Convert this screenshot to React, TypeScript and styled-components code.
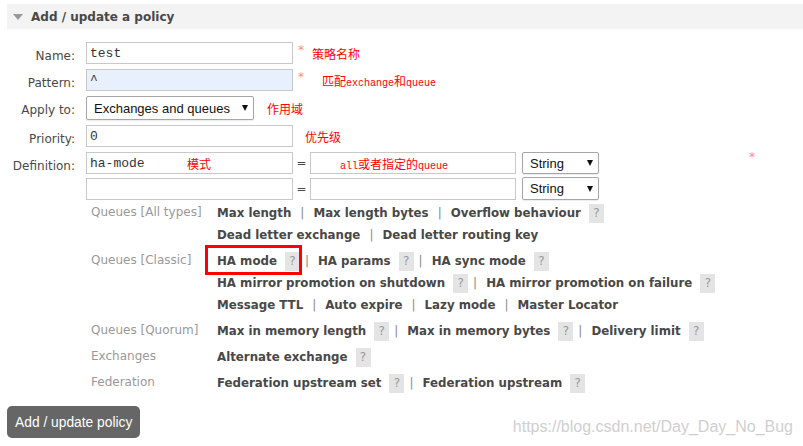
import React from "react";
import styled, { createGlobalStyle } from "styled-components";

const GlobalStyle = createGlobalStyle`
  html, body { margin: 0; padding: 0; background: #fff; }
  body {
    font-family: "DejaVu Sans", Verdana, sans-serif;
    font-size: 12px;
    color: #484848;
  }
  * { box-sizing: border-box; }
`;

const Page = styled.div`
  position: relative;
  width: 803px;
  height: 446px;
  overflow: hidden;
  padding: 4px 0 0 7px;
`;

const SectionHeader = styled.div`
  height: 25px;
  background: #f3f3f3;
  display: flex;
  align-items: center;
  gap: 8px;
  padding-left: 6px;
`;

const Triangle = styled.span`
  width: 0;
  height: 0;
  border-left: 5.5px solid transparent;
  border-right: 5.5px solid transparent;
  border-top: 6px solid #999;
`;

const Title = styled.h2`
  margin: 0;
  font-size: 12px;
  font-weight: bold;
  color: #484848;
`;

const FormGrid = styled.div`
  margin-top: 13px;
  display: grid;
  grid-template-columns: 68px 1fr;
  column-gap: 11px;
  row-gap: 5px;
  align-items: start;
`;

const Label = styled.label`
  text-align: right;
  padding-top: 6px;
  line-height: 16px;
  white-space: nowrap;
`;

const FieldRow = styled.div`
  display: flex;
  align-items: center;
`;

const TextInput = styled.input<{ $w: number; $tint?: boolean }>`
  width: ${(p) => p.$w}px;
  height: 22px;
  margin: 0;
  border: 1px solid #c8c8c8;
  padding: 0 3px;
  font-family: "Liberation Mono", "Courier New", monospace;
  font-size: 13px;
  color: #333;
  background: ${(p) => (p.$tint ? "#e8f0fe" : "#fff")};
  outline: none;
`;

const Mand = styled.span`
  align-self: flex-start;
  line-height: 16px;
  color: #f88;
  font-size: 12px;
  margin-left: 5px;
`;

const Note = styled.span<{ $ml?: number }>`
  margin-left: ${(p) => p.$ml ?? 0}px;
  color: #f00;
  font-family: "Noto Sans CJK SC", sans-serif;
  font-size: 12px;
  white-space: nowrap;
`;

const Lat = styled.span`
  font-family: "Liberation Mono", monospace;
  font-size: 10px;
`;

const FieldWrap = styled.span`
  position: relative;
  display: inline-flex;
`;

const OverNote = styled.span<{ $left: number }>`
  position: absolute;
  left: ${(p) => p.$left}px;
  top: 50%;
  transform: translateY(-50%);
  color: #f00;
  font-family: "Noto Sans CJK SC", sans-serif;
  font-size: 12px;
  white-space: nowrap;
  pointer-events: none;
`;

const SelectBox = styled.div<{ $w: number; $h: number }>`
  width: ${(p) => p.$w}px;
  height: ${(p) => p.$h}px;
  border: 1px solid #a6a6a6;
  border-radius: 2px;
  background: #fff;
  display: flex;
  align-items: center;
  justify-content: space-between;
  padding: 0 5px 0 7px;
  font-family: "Liberation Sans", Arial, sans-serif;
  font-size: 13px;
  color: #111;
  box-shadow: 0 1px 1px rgba(0, 0, 0, 0.08);
`;

const Caret = styled.span`
  width: 0;
  height: 0;
  border-left: 3.5px solid transparent;
  border-right: 3.5px solid transparent;
  border-top: 6px solid #111;
`;

const DefCell = styled.div`
  display: flex;
  flex-direction: column;
`;

const DefWrap = styled.div`
  display: flex;
  width: 669px;
`;

const DefRows = styled.div`
  display: flex;
  flex-direction: column;
  gap: 3px;
`;

const DefMand = styled.span`
  margin-left: auto;
  align-self: flex-start;
  line-height: 10px;
  color: #f88;
  font-size: 12px;
`;

const Eq = styled.span`
  width: 17px;
  text-align: center;
  color: #484848;
`;

const Spacer = styled.span`
  width: 6px;
`;

const HelpTable = styled.div`
  display: grid;
  grid-template-columns: 126px 1fr;
  padding-left: 5px;
`;

const Category = styled.div`
  padding: 1px 0 3px;
  line-height: 22px;
  font-size: 12px;
  color: #999;
  white-space: nowrap;
`;

const Links = styled.div`
  padding: 2px 0;
`;

const LinkLine = styled.div`
  height: 22px;
  display: flex;
  align-items: center;
  white-space: nowrap;
`;

const ArgLink = styled.span`
  font-weight: bold;
  font-size: 11.8px;
  color: #484848;
`;

const HelpBox = styled.span`
  display: inline-block;
  width: 15px;
  height: 19px;
  line-height: 19px;
  margin-left: 8px;
  text-align: center;
  background: #e4e4e4;
  color: #999;
  font-size: 12px;
`;

const Sep = styled.span<{ $afterHelp: boolean }>`
  color: #888;
  margin: 0 9px 0 ${(p) => (p.$afterHelp ? 5 : 9)}px;
`;

const Marked = styled.span`
  position: relative;
  display: inline-flex;
  align-items: center;
  &::after {
    content: "";
    position: absolute;
    top: -7px;
    bottom: -4px;
    left: -12px;
    right: -2px;
    border: 3px solid #f00;
  }
`;

const SubmitButton = styled.button`
  margin-top: 10px;
  height: 32px;
  padding: 0 8px;
  border: none;
  border-radius: 5px;
  background: #666;
  color: #fff;
  font-family: "Liberation Sans", Arial, sans-serif;
  font-size: 13.8px;
`;

const Watermark = styled.div`
  position: absolute;
  right: 10px;
  bottom: 10px;
  color: #cfcfcf;
  font-family: "Liberation Sans", Arial, sans-serif;
  font-size: 16px;
`;

type Item = { t: string; help?: boolean; mark?: boolean };
type Group = { label: string; lines: Item[][] };

const groups: Group[] = [
  {
    label: "Queues [All types]",
    lines: [
      [{ t: "Max length" }, { t: "Max length bytes" }, { t: "Overflow behaviour", help: true }],
      [{ t: "Dead letter exchange" }, { t: "Dead letter routing key" }],
    ],
  },
  {
    label: "Queues [Classic]",
    lines: [
      [
        { t: "HA mode", help: true, mark: true },
        { t: "HA params", help: true },
        { t: "HA sync mode", help: true },
      ],
      [
        { t: "HA mirror promotion on shutdown", help: true },
        { t: "HA mirror promotion on failure", help: true },
      ],
      [{ t: "Message TTL" }, { t: "Auto expire" }, { t: "Lazy mode" }, { t: "Master Locator" }],
    ],
  },
  {
    label: "Queues [Quorum]",
    lines: [
      [
        { t: "Max in memory length", help: true },
        { t: "Max in memory bytes", help: true },
        { t: "Delivery limit", help: true },
      ],
    ],
  },
  { label: "Exchanges", lines: [[{ t: "Alternate exchange", help: true }]] },
  {
    label: "Federation",
    lines: [[{ t: "Federation upstream set", help: true }, { t: "Federation upstream", help: true }]],
  },
];

const renderItem = (it: Item) => {
  const inner = (
    <>
      <ArgLink>{it.t}</ArgLink>
      {it.help && <HelpBox>?</HelpBox>}
    </>
  );
  return it.mark ? <Marked>{inner}</Marked> : inner;
};

const Select = ({ w, h, text }: { w: number; h: number; text: string }) => (
  <SelectBox $w={w} $h={h}>
    <span>{text}</span>
    <Caret />
  </SelectBox>
);

export default function App() {
  return (
    <>
      <GlobalStyle />
      <Page>
        <SectionHeader>
          <Triangle />
          <Title>Add / update a policy</Title>
        </SectionHeader>

        <FormGrid>
          <Label>Name:</Label>
          <FieldRow>
            <TextInput $w={207} value="test" readOnly />
            <Mand>*</Mand>
            <Note $ml={8}>策略名称</Note>
          </FieldRow>

          <Label>Pattern:</Label>
          <FieldRow>
            <TextInput $w={207} $tint value="^" readOnly />
            <Mand>*</Mand>
            <Note $ml={18}>
              匹配<Lat>exchange</Lat>和<Lat>queue</Lat>
            </Note>
          </FieldRow>

          <Label>Apply to:</Label>
          <FieldRow>
            <Select w={168} h={24} text="Exchanges and queues" />
            <Note $ml={13}>作用域</Note>
          </FieldRow>

          <Label>Priority:</Label>
          <FieldRow>
            <TextInput $w={207} value="0" readOnly />
            <Note $ml={12}>优先级</Note>
          </FieldRow>

          <Label>Definition:</Label>
          <DefCell>
            <DefWrap>
              <DefRows>
                <FieldRow>
                  <FieldWrap>
                    <TextInput $w={207} value="ha-mode" readOnly />
                    <OverNote $left={101}>模式</OverNote>
                  </FieldWrap>
                  <Eq>=</Eq>
                  <FieldWrap>
                    <TextInput $w={206} value="" readOnly />
                    <OverNote $left={30}>
                      <Lat>all</Lat>或者指定的<Lat>queue</Lat>
                    </OverNote>
                  </FieldWrap>
                  <Spacer />
                  <Select w={77} h={22} text="String" />
                </FieldRow>
                <FieldRow>
                  <TextInput $w={207} value="" readOnly />
                  <Eq>=</Eq>
                  <TextInput $w={206} value="" readOnly />
                  <Spacer />
                  <Select w={77} h={23} text="String" />
                </FieldRow>
              </DefRows>
              <DefMand>*</DefMand>
            </DefWrap>

            <HelpTable>
              {groups.map((g) => (
                <React.Fragment key={g.label}>
                  <Category>{g.label}</Category>
                  <Links>
                    {g.lines.map((line, li) => (
                      <LinkLine key={li}>
                        {line.map((it, i) => (
                          <React.Fragment key={it.t}>
                            {i > 0 && <Sep $afterHelp={!!line[i - 1].help}>|</Sep>}
                            {renderItem(it)}
                          </React.Fragment>
                        ))}
                      </LinkLine>
                    ))}
                  </Links>
                </React.Fragment>
              ))}
            </HelpTable>
          </DefCell>
        </FormGrid>

        <SubmitButton>Add / update policy</SubmitButton>
        <Watermark>https://blog.csdn.net/Day_Day_No_Bug</Watermark>
      </Page>
    </>
  );
}
